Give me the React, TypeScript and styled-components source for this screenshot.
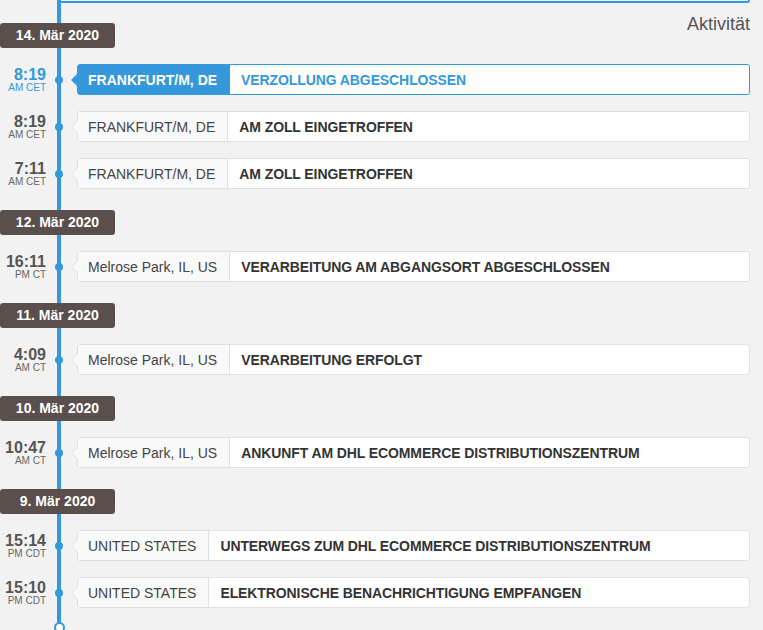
import styled, { createGlobalStyle } from 'styled-components';

const BLUE = '#3498db';

const GlobalStyle = createGlobalStyle`
  html, body {
    margin: 0;
    padding: 0;
    overflow: hidden;
    background: #f2f2f2;
    font-family: "Liberation Sans", Arial, sans-serif;
  }
`;

type TrackEvent = {
  time: string;
  zone: string;
  place: string;
  status: string;
  current?: boolean;
};

type Day = { date: string; events: TrackEvent[] };

const days: Day[] = [
  {
    date: '14. Mär 2020',
    events: [
      { time: '8:19', zone: 'AM CET', place: 'FRANKFURT/M, DE', status: 'VERZOLLUNG ABGESCHLOSSEN', current: true },
      { time: '8:19', zone: 'AM CET', place: 'FRANKFURT/M, DE', status: 'AM ZOLL EINGETROFFEN' },
      { time: '7:11', zone: 'AM CET', place: 'FRANKFURT/M, DE', status: 'AM ZOLL EINGETROFFEN' },
    ],
  },
  {
    date: '12. Mär 2020',
    events: [
      { time: '16:11', zone: 'PM CT', place: 'Melrose Park, IL, US', status: 'VERARBEITUNG AM ABGANGSORT ABGESCHLOSSEN' },
    ],
  },
  {
    date: '11. Mär 2020',
    events: [{ time: '4:09', zone: 'AM CT', place: 'Melrose Park, IL, US', status: 'VERARBEITUNG ERFOLGT' }],
  },
  {
    date: '10. Mär 2020',
    events: [
      { time: '10:47', zone: 'AM CT', place: 'Melrose Park, IL, US', status: 'ANKUNFT AM DHL ECOMMERCE DISTRIBUTIONSZENTRUM' },
    ],
  },
  {
    date: '9. Mär 2020',
    events: [
      { time: '15:14', zone: 'PM CDT', place: 'UNITED STATES', status: 'UNTERWEGS ZUM DHL ECOMMERCE DISTRIBUTIONSZENTRUM' },
      { time: '15:10', zone: 'PM CDT', place: 'UNITED STATES', status: 'ELEKTRONISCHE BENACHRICHTIGUNG EMPFANGEN' },
    ],
  },
];

// vertical rail is painted as a background stripe of the whole list
const Timeline = styled.div`
  width: 750px;
  background: linear-gradient(${BLUE}, ${BLUE}) no-repeat 57px 0 / 4px 100%;
  padding-bottom: 20px;
`;

const PanelEdge = styled.div`
  margin-left: 57px;
  height: 1px;
  border-bottom: 2px solid ${BLUE};
  border-right: 2px solid ${BLUE};
  border-bottom-right-radius: 4px;
`;

const TopRow = styled.div`
  display: flex;
  justify-content: space-between;
  align-items: flex-start;
  padding-top: 11px;
`;

const Title = styled.div`
  font-size: 18px;
  line-height: 20px;
  color: #555;
`;

const DateBadge = styled.div<{ $first?: boolean }>`
  width: 115px;
  height: 25px;
  margin-top: ${({ $first }) => ($first ? '9px' : '21px')};
  margin-bottom: 16px;
  border-radius: 3px;
  background: #5a4f4c;
  color: #fff;
  font-size: 14px;
  font-weight: 700;
  line-height: 25px;
  text-align: center;
`;

const EventList = styled.div`
  display: flex;
  flex-direction: column;
  gap: 16px;
`;

const EventRow = styled.div`
  display: flex;
  align-items: center;
  height: 31px;
`;

const TimeCell = styled.div<{ $current?: boolean }>`
  width: 46px;
  text-align: right;
  color: ${({ $current }) => ($current ? BLUE : '#555')};
  padding-top: 1px;
`;

const Clock = styled.div`
  font-size: 16px;
  font-weight: 700;
  line-height: 15px;
`;

const Zone = styled.div<{ $current?: boolean }>`
  font-size: 10px;
  line-height: 11px;
  color: ${({ $current }) => ($current ? BLUE : '#666')};
`;

const Dot = styled.span`
  width: 8px;
  height: 8px;
  margin: 0 14px 0 9px;
  border-radius: 50%;
  background: ${BLUE};
  flex-shrink: 0;
`;

const Card = styled.div<{ $current?: boolean }>`
  position: relative;
  flex: 1;
  display: flex;
  height: 100%;
  box-sizing: border-box;
  border: 1px solid ${({ $current }) => ($current ? BLUE : '#e0e0e0')};
  border-radius: 3px;
  background: #fff;

  /* pointer towards the rail */
  &::before,
  &::after {
    content: '';
    position: absolute;
    top: 50%;
    border-style: solid;
    border-color: transparent;
  }
  &::before {
    left: -7px;
    margin-top: -7px;
    border-width: 7px 7px 7px 0;
    border-right-color: ${({ $current }) => ($current ? BLUE : '#e0e0e0')};
  }
  &::after {
    left: -6px;
    margin-top: -6px;
    border-width: 6px 6px 6px 0;
    border-right-color: ${({ $current }) => ($current ? BLUE : '#f9f9f9')};
  }
`;

const Place = styled.div<{ $current?: boolean }>`
  display: flex;
  align-items: center;
  padding: 0 12px 0 10px;
  background: ${({ $current }) => ($current ? BLUE : '#f9f9f9')};
  border-right: 1px solid ${({ $current }) => ($current ? BLUE : '#e0e0e0')};
  color: ${({ $current }) => ($current ? '#fff' : '#444')};
  font-size: 14px;
  font-weight: ${({ $current }) => ($current ? 700 : 400)};
  white-space: nowrap;
`;

const Status = styled.div<{ $current?: boolean }>`
  display: flex;
  align-items: center;
  padding: 0 11px;
  color: ${({ $current }) => ($current ? BLUE : '#333')};
  font-size: 14px;
  font-weight: 700;
  letter-spacing: -0.1px;
  white-space: nowrap;
`;

const RailEnd = styled.span`
  display: block;
  width: 11px;
  height: 11px;
  margin: 14px 0 0 53.5px;
  box-sizing: border-box;
  border: 2px solid ${BLUE};
  border-radius: 50%;
  background: #fff;
`;

const App = () => (
  <>
    <GlobalStyle />
    <Timeline>
      <PanelEdge />
      {days.map((day, i) => (
        <section key={day.date}>
          {i === 0 ? (
            <TopRow>
              <DateBadge $first>{day.date}</DateBadge>
              <Title>Aktivität</Title>
            </TopRow>
          ) : (
            <DateBadge>{day.date}</DateBadge>
          )}
          <EventList>
            {day.events.map((ev, j) => (
              <EventRow key={j}>
                <TimeCell $current={ev.current}>
                  <Clock>{ev.time}</Clock>
                  <Zone $current={ev.current}>{ev.zone}</Zone>
                </TimeCell>
                <Dot />
                <Card $current={ev.current}>
                  <Place $current={ev.current}>{ev.place}</Place>
                  <Status $current={ev.current}>{ev.status}</Status>
                </Card>
              </EventRow>
            ))}
          </EventList>
        </section>
      ))}
      <RailEnd />
    </Timeline>
  </>
);

export default App;
